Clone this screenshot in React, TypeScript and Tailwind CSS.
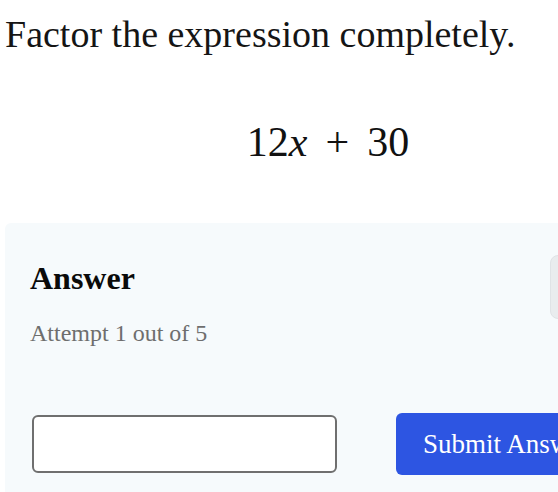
export default function App() {
  return (
    <div className="w-full min-h-screen overflow-hidden bg-white" style={{ fontFamily: '"Liberation Serif", serif' }}>
      <div className="w-[656px]">
        {/* Question */}
        <h1 className="mt-[12px] pl-[5px] text-[38px] leading-[44px] font-normal text-[#151515]">
          Factor the expression completely.
        </h1>

        {/* Expression */}
        <div className="mt-[62px] flex justify-center text-[42px] leading-[48px] text-[#111111]">
          <span>12</span>
          <span className="italic">x</span>
          <span className="mx-[18px]">+</span>
          <span>30</span>
        </div>

        {/* Answer panel */}
        <div className="mt-[57px] ml-[5px] w-[646px] rounded-md bg-[#f6fafc] pt-[32px] pl-[25px] pr-[25px] pb-[30px]">
          <div className="flex items-start justify-between">
            <div className="pt-[3px]">
              <h2 className="text-[32px] leading-[40px] font-bold text-[#0a0a0a]">Answer</h2>
              <p className="mt-[20px] text-[24px] leading-[30px] text-[#6e6e6e]">Attempt 1 out of 5</p>
            </div>
            <div className="h-[64px] w-[76px] rounded-lg border border-[#dfe3e6] bg-[#e9ecee]" />
          </div>

          <div className="mt-[65px] flex items-center gap-[59px]">
            <input
              type="text"
              className="ml-[2px] h-[58px] w-[305px] rounded-md border-2 border-[#6f6f6f] bg-white px-3 outline-none"
            />
            <button className="h-[62px] shrink-0 rounded-md bg-[#2d55e2] px-[27px] text-[27px] text-white">
              Submit Answer
            </button>
          </div>
        </div>
      </div>
    </div>
  );
}
